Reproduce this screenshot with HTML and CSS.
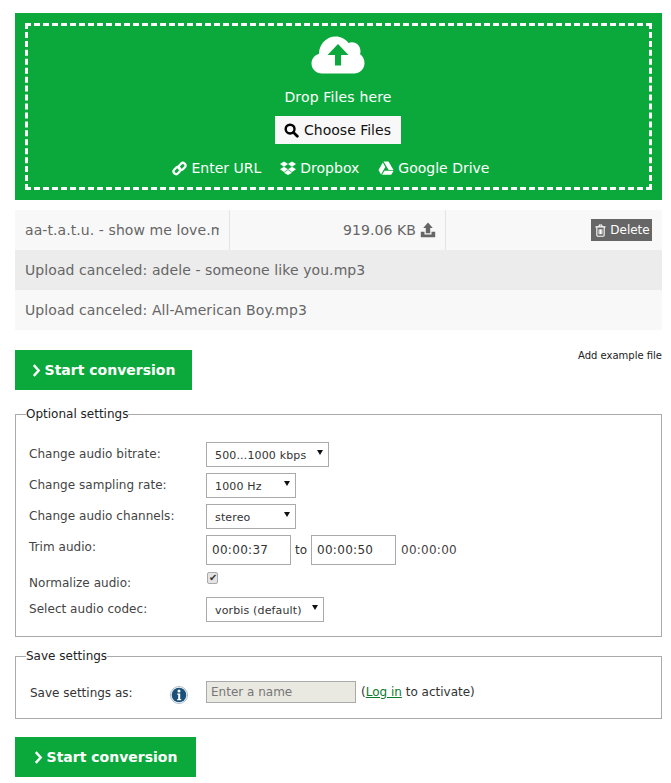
FILE: index.html
```html
<!DOCTYPE html>
<html lang="en">
<head>
<meta charset="utf-8">
<title>Audio converter</title>
<link rel="stylesheet" href="styles.css">
</head>
<body>
<main class="page">
  <section class="drop">
    <div class="drop-inner">
      <svg class="cloud" viewBox="0 0 54 38" width="54" height="38" aria-hidden="true">
        <path fill="#fff" d="M11 37.500C5 37.500 .5 33 .5 27.500c0-4.600 3-8.400 7.400-9.600C8.200 8 15.500 .5 24.500 .5c5.300 0 10 2.500 13 6.500 1-.5 2.300-.8 3.500-.8 5 0 8.500 4 8.500 9 0 1-.2 2-.5 2.800 2.700 2 4.500 5.300 4.500 9 0 6-4.800 10.500-10.500 10.500z"/>
        <path fill="#0BA93B" d="M24 29.500V19h-7.500L27 8l10.500 11H30v10.500z"/>
      </svg>
      <p class="drop-text">Drop Files here</p>
      <button class="choose" type="button">
        <svg viewBox="0 0 16 16" width="15" height="15" aria-hidden="true"><circle cx="6.500" cy="6.500" r="4.700" fill="none" stroke="#000" stroke-width="2.600"/><path d="M10 10l4.200 4.200" stroke="#000" stroke-width="3" stroke-linecap="round"/></svg>
        Choose Files
      </button>
      <div class="sources">
        <span class="source source-url">
          <svg viewBox="0 0 16 16" width="15" height="15" aria-hidden="true"><g fill="none" stroke="#fff" stroke-width="2.400"><rect x="8" y="1.800" width="5.500" height="8" rx="2.700" transform="rotate(42 10.750 5.800)"/><rect x="2.500" y="6.200" width="5.500" height="8" rx="2.700" transform="rotate(42 5.250 10.200)"/></g></svg>
          Enter URL
        </span>
        <span class="source">
          <svg viewBox="0 0 16 14" width="16" height="14" aria-hidden="true"><path fill="#fff" d="M4 .5L0 3.100l4 2.700 4-2.700zM12 .5L8 3.100l4 2.700 4-2.700zM0 8.300L4 11l4-2.700-4-2.500zM12 5.800L8 8.300l4 2.700 4-2.700zM4 11.700l4 2.300 4-2.300-4-2.600z"/></svg>
          Dropbox
        </span>
        <span class="source">
          <svg viewBox="0 0 16 14" width="16" height="14" aria-hidden="true"><path fill="#fff" d="M5.500 .5h5l5 8.500H10.700zM4.800 1.500L7.300 6 3 13.500.5 9zM6.500 9.700h9.200L13.200 13.800H4z"/></svg>
          Google Drive
        </span>
      </div>
    </div>
  </section>

  <section class="files">
    <div class="file file-light file-split">
      <div class="cell cell-name"><div class="name-clip">aa-t.a.t.u. - show me love.mp3</div></div>
      <div class="cell cell-size">919.06 KB
        <svg viewBox="0 0 16 16" width="16" height="16" aria-hidden="true"><path fill="#666" d="M8 .5l4.800 5.500H10.200v5.300H5.800V6H3.200zM.8 9.800h3.700v2.700h7V9.800h3.700v5.400H.8z"/></svg>
      </div>
      <div class="cell cell-action">
        <button class="delete" type="button">
          <svg viewBox="0 0 12 14" width="11" height="13" aria-hidden="true"><path fill="none" stroke="#fff" stroke-width="1.200" d="M2 3.500v8.700c0 .6.400 1 1 1h6c.6 0 1-.4 1-1V3.500M.5 3h11M4 3l.8-2h2.400L8 3M4.500 5.500v5.500M6 5.500v5.500M7.500 5.500v5.500"/></svg>
          Delete
        </button>
      </div>
    </div>
    <div class="file file-dark">Upload canceled: adele - someone like you.mp3</div>
    <div class="file file-light">Upload canceled: All-American Boy.mp3</div>
  </section>

  <div class="actions">
    <button class="start" type="button"><svg viewBox="0 0 8 12" width="9" height="13" aria-hidden="true"><path d="M1.500 1l4.500 5-4.500 5" fill="none" stroke="#fff" stroke-width="2.200"/></svg> Start conversion</button>
    <a class="example" href="#">Add example file</a>
  </div>

  <fieldset class="box box-options">
    <legend>Optional settings</legend>
    <div class="settings">
      <span class="lbl">Change audio bitrate:</span>
      <label class="sel sel-wide"><select><option>500...1000 kbps</option></select></label>
      <span class="lbl">Change sampling rate:</span>
      <label class="sel sel-narrow"><select><option>1000 Hz</option></select></label>
      <span class="lbl">Change audio channels:</span>
      <label class="sel sel-narrow"><select><option>stereo</option></select></label>
      <span class="lbl">Trim audio:</span>
      <div class="trim">
        <input class="time" type="text" value="00:00:37">
        <span class="to">to</span>
        <input class="time" type="text" value="00:00:50">
        <span class="total">00:00:00</span>
      </div>
      <span class="lbl lbl-normalize">Normalize audio:</span>
      <div class="check-wrap"><input class="check" type="checkbox" checked></div>
      <span class="lbl">Select audio codec:</span>
      <label class="sel sel-codec"><select><option>vorbis (default)</option></select></label>
    </div>
  </fieldset>

  <fieldset class="box box-save">
    <legend>Save settings</legend>
    <div class="save-row">
      <span class="save-label">Save settings as:</span>
      <svg class="info" viewBox="0 0 18 18" width="18" height="18" aria-hidden="true"><circle cx="9" cy="9" r="8.500" fill="#fff" stroke="#a9bcc9"/><circle cx="9" cy="9" r="7.300" fill="#1b5078"/><circle cx="9" cy="5" r="1.500" fill="#fff"/><path d="M7.200 7.500h3V13h1v1.200H7.200V13h1V8.700h-1z" fill="#fff"/></svg>
      <input class="name" type="text" placeholder="Enter a name" disabled>
      <span class="activate">(<a href="#">Log in</a> to activate)</span>
    </div>
  </fieldset>

  <button class="start start-bottom" type="button"><svg viewBox="0 0 8 12" width="9" height="13" aria-hidden="true"><path d="M1.500 1l4.500 5-4.500 5" fill="none" stroke="#fff" stroke-width="2.200"/></svg> Start conversion</button>
</main>
</body>
</html>
```
FILE: styles.css
```css
* { box-sizing: border-box; }
html, body { margin: 0; background: #fff; }
body { font-family: Tahoma, "DejaVu Sans", Verdana, sans-serif; font-size: 13px; color: #333; }
.page { padding: 13px 9px 6px 15px; width: 671px; height: 783px; overflow: hidden; }

.drop { background: #0BA93B; padding: 10px; height: 187px; }
.drop-inner { border: 3px dashed #fff; height: 167px; display: flex; flex-direction: column; align-items: center; padding-top: 10px; color: #fff; }
.cloud { display: block; margin-right: 2px; }
.drop-text { margin: 13px 1px 0 0; font-size: 14px; line-height: 20px; letter-spacing: .15px; }
.choose { margin: 9px 2px 0 0; width: 126px; height: 28px; padding: 0; border: 0; background: #f8f8f8; color: #111; font: inherit; font-size: 14px; display: flex; align-items: center; justify-content: center; gap: 5px; }
.sources { margin: 14px 16px 0 0; display: flex; gap: 19px; font-size: 14px; line-height: 20px; }
.source { display: flex; align-items: center; gap: 4px; }
.source-url { gap: 5px; }

.files { margin-top: 10px; font-size: 14px; color: #666; }
.file { height: 40px; line-height: 40px; padding-left: 10px; white-space: nowrap; letter-spacing: .08px; }
.file-light { background: #f8f8f8; }
.file-dark { background: #ececec; }
.file-split { display: flex; padding-left: 0; }
.cell { height: 40px; border-right: 1px solid #e3e3e3; }
.cell-name { width: 215px; padding-left: 10px; padding-right: 10px; }
.name-clip { overflow: hidden; }
.cell-size { width: 216px; display: flex; align-items: center; justify-content: flex-end; gap: 4px; padding-right: 9px; }
.cell-action { flex: 1; border-right: 0; display: flex; align-items: center; justify-content: flex-end; padding-right: 10px; }
.delete { width: 61px; height: 22px; padding: 0 0 0 2px; border: 0; background: #666; color: #fff; font: inherit; font-size: 12px; display: flex; align-items: center; justify-content: center; gap: 4px; }

.actions { margin-top: 20px; height: 40px; display: flex; justify-content: space-between; align-items: flex-start; }
.start { height: 40px; width: 177px; border: 0; padding: 0; background: #0BA93B; color: #fff; font: inherit; font-size: 14px; font-weight: 700; display: flex; align-items: center; justify-content: center; gap: 4px; }
.start-bottom { width: 181px; margin-top: 18px; }
.example { margin-top: 0; font-size: 10px; line-height: 12px; color: #222; text-decoration: none; }

.box { margin: 0; padding: 0; border: 1px solid #aaa; }
.box legend { margin-left: 10px; padding: 0; font-size: 12px; line-height: 16px; color: #222; }
.box-options { margin-top: 16px; height: 231px; }
.box-save { margin-top: 11px; height: 71px; }

.settings { display: grid; grid-template-columns: 177px 1fr; grid-auto-rows: auto; row-gap: 6px; padding: 20px 0 0 13px; align-items: start; }
.lbl { font-size: 12px; line-height: 16px; color: #444; padding-top: 4px; letter-spacing: .04px; }
.lbl-normalize { height: 20px; }
.sel { position: relative; display: block; height: 25px; }
.sel-wide { width: 123px; }
.sel-narrow { width: 90px; }
.sel-codec { width: 118px; }
.sel::after { content: ""; position: absolute; right: 6px; top: 8px; border: 3.5px solid transparent; border-top: 5px solid #111; border-bottom: 0; }
.sel select { appearance: none; width: 100%; height: 25px; padding: 2px 0 0 8px; border: 1px solid #aaa; border-radius: 0; background: #fff; font: inherit; font-size: 11px; letter-spacing: .15px; color: #333; }
.trim { display: flex; align-items: center; height: 30px; }
.time { width: 85px; height: 30px; padding: 0 5px; border: 1px solid #aaa; font: inherit; font-size: 12px; letter-spacing: .3px; color: #333; }
.to { width: 20px; text-align: center; font-size: 12px; }
.total { margin-left: 5px; font-size: 12px; letter-spacing: .25px; color: #444; }
.check-wrap { height: 20px; }
.check { appearance: none; position: relative; display: block; margin: 1px 0 0 1px; width: 11px; height: 12px; background: #e4e4e4; border: 1px solid #aaa; border-radius: 2px; }
.check::after { content: "\2714"; position: absolute; left: 0; top: -1px; width: 9px; text-align: center; font-size: 10px; line-height: 12px; color: #333; }

.save-row { display: flex; align-items: flex-start; padding: 17px 0 0 14px; }
.save-label { width: 140px; font-size: 12px; line-height: 16px; margin-top: 4px; color: #333; }
.info { margin-top: 5px; }
.name { margin-left: 18px; width: 150px; height: 22px; padding: 0 4px; border: 1px solid #aaa; background: #e9e9e1; font: inherit; font-size: 12px; }
.name::placeholder { color: #777; opacity: 1; }
.activate { margin-left: 5px; font-size: 12px; line-height: 22px; color: #333; }
.activate a { color: #0a7a2c; }
```
